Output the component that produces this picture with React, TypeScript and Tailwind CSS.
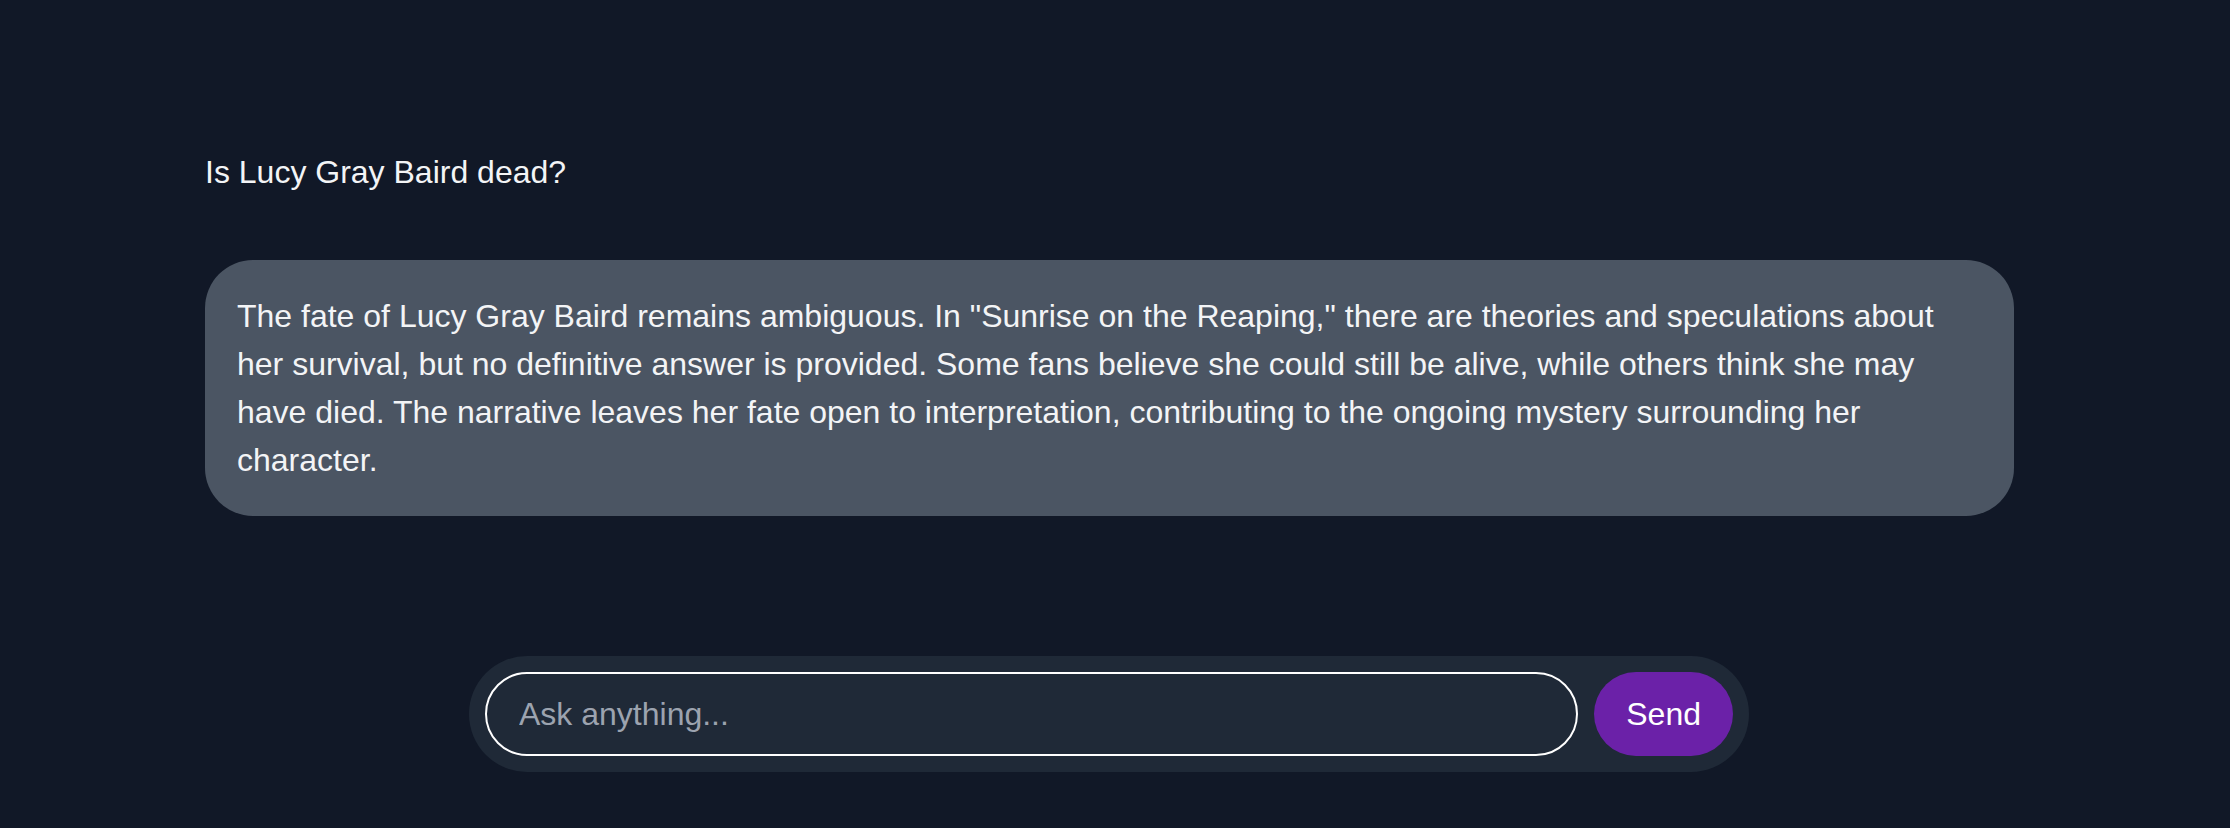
import { useState } from "react";

const answer =
  'The fate of Lucy Gray Baird remains ambiguous. In "Sunrise on the Reaping," there are theories and speculations about her survival, but no definitive answer is provided. Some fans believe she could still be alive, while others think she may have died. The narrative leaves her fate open to interpretation, contributing to the ongoing mystery surrounding her character.';

export default function App() {
  let [draft, setDraft] = useState("");

  return (
    <div className="flex h-screen flex-col bg-[#111827] font-['Liberation_Sans',Arial,sans-serif] text-[32px] leading-[48px] text-[#f3f4f6]">
      <main className="flex-1 pl-[205px] pr-[216px] pt-[148px]">
        <p>Is Lucy Gray Baird dead?</p>
        <div className="mt-[64px] rounded-[48px] bg-[#4b5563] p-[32px]">
          <p>{answer}</p>
        </div>
      </main>

      <form
        className="mb-[56px] ml-[469px] flex w-[1280px] items-stretch gap-[16px] rounded-full bg-[#1f2937] p-[16px]"
        onSubmit={(event) => {
          event.preventDefault();
          setDraft("");
        }}
      >
        <input
          value={draft}
          onChange={(event) => setDraft(event.target.value)}
          placeholder="Ask anything..."
          className="h-[84px] min-w-0 flex-1 rounded-full border-2 border-white bg-[#1f2937] px-[32px] text-[32px] text-white outline-none placeholder:text-[#9ca3af]"
        />
        <button
          type="submit"
          className="rounded-full bg-[#6b21a8] px-[32px] text-[32px] text-white"
        >
          Send
        </button>
      </form>
    </div>
  );
}
